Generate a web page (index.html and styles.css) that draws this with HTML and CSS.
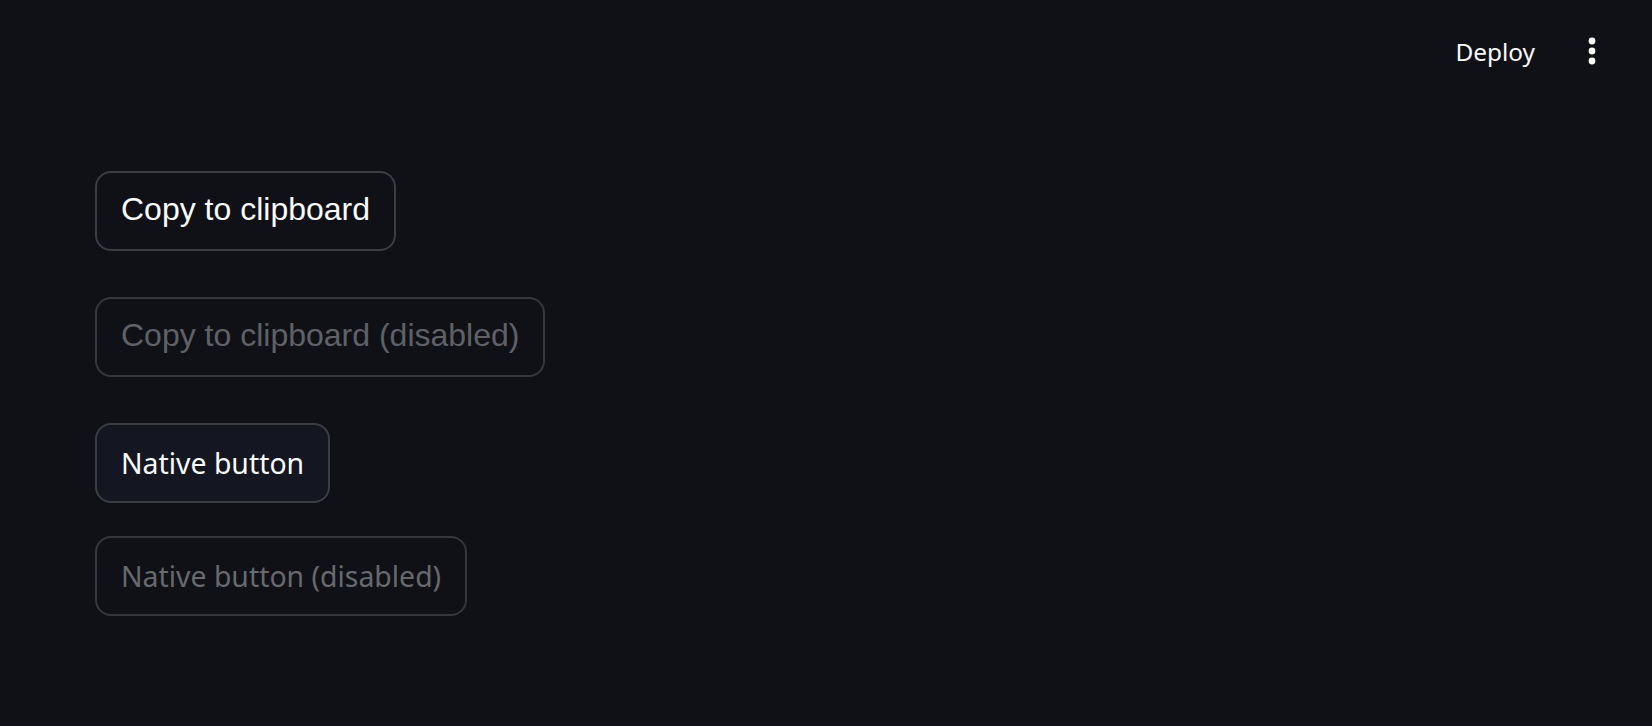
FILE: index.html
```html
<!DOCTYPE html>
<html lang="en">
<head>
    <meta charset="UTF-8">
    <title>Copy to clipboard</title>
    <meta name="viewport" content="width=device-width, initial-scale=1.0">
    <link rel="stylesheet" href="styles.css">
</head>
<body>

    <header class="toolbar">
        <button class="deploy" type="button">Deploy</button>
        <button class="menu" type="button" aria-label="Main menu">
            <svg width="14" height="34" viewBox="0 0 14 34">
                <circle cx="7" cy="7" r="3.4" fill="#fafafa"/>
                <circle cx="7" cy="17" r="3.4" fill="#fafafa"/>
                <circle cx="7" cy="27" r="3.4" fill="#fafafa"/>
            </svg>
        </button>
    </header>

    <main class="main">
        <div class="frame">
            <button class="clip-btn" type="button">Copy to clipboard</button>
        </div>
        <div class="frame">
            <button class="clip-btn" type="button" disabled>Copy to clipboard (disabled)</button>
        </div>
        <div>
            <button class="native-btn" type="button">Native button</button>
        </div>
        <div>
            <button class="native-btn" type="button" disabled>Native button (disabled)</button>
        </div>
    </main>

</body>
</html>
```

FILE: styles.css
```css
body {
    margin: 0;
    background-color: #0f1117;
    color: #fafafa;
    font-family: "Noto Sans", sans-serif;
}
.toolbar {
    display: flex;
    justify-content: flex-end;
    align-items: center;
    height: 102px;
    padding-right: 53px;
}
.deploy {
    background: none;
    border: none;
    color: #fafafa;
    font-family: "Noto Sans", sans-serif;
    font-size: 24.4px;
    padding: 0;
    margin-right: 50px;
    cursor: pointer;
}
.menu {
    background: none;
    border: none;
    padding: 0;
    display: flex;
    cursor: pointer;
}
.main {
    display: flex;
    flex-direction: column;
    align-items: flex-start;
    gap: 33px;
    padding: 69px 0 0 95px;
}
.frame {
    padding-bottom: 13px;
}
.clip-btn {
    height: 80px;
    padding: 0 24px 3px;
    border: 2px solid #3b3d43;
    border-radius: 16px;
    background-color: transparent;
    color: #fafafa;
    font-family: "Liberation Sans", Arial, sans-serif;
    font-size: 32px;
    cursor: pointer;
}
.clip-btn:disabled {
    color: #5f6166;
    border-color: #35373c;
    cursor: not-allowed;
}
.native-btn {
    height: 80px;
    padding: 0 24px;
    border: 2px solid #3b3d43;
    border-radius: 16px;
    background-color: #141721;
    color: #fafafa;
    font-family: "Noto Sans", sans-serif;
    font-size: 28.4px;
    cursor: pointer;
}
.native-btn:disabled {
    background-color: transparent;
    color: #67696d;
    border-color: #35373c;
    cursor: not-allowed;
}
```
